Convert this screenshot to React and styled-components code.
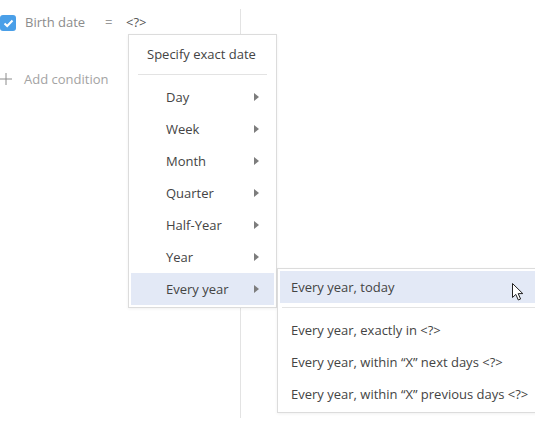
import React from "react";
import styled, { createGlobalStyle } from "styled-components";

const Global = createGlobalStyle`
  html, body { margin: 0; padding: 0; background: #fff; }
  body { font-family: "Open Sans", "Liberation Sans", sans-serif; }
  * { box-sizing: border-box; }
`;

const Page = styled.div`
  position: relative;
  width: 535px;
  height: 425px;
  overflow: hidden;
  padding-top: 9px;
`;

const LeftPanel = styled.div`
  width: 241px;
  height: 409px;
  border-right: 1px solid #e3e3e3;
  display: flex;
  flex-direction: column;
`;

const ConditionRow = styled.div`
  display: flex;
  align-items: center;
  height: 26px;
  font-size: 13px;
`;

const Checkbox = styled.span`
  width: 16px;
  height: 16px;
  border-radius: 3px;
  background: #4a9fe8;
  display: flex;
  align-items: center;
  justify-content: center;
  margin-top: 2px;
`;

const FieldName = styled.span`
  color: #8c8c8c;
  margin-left: 9px;
  width: 80px;
`;

const Op = styled.span`
  color: #9a9a9a;
  width: 21px;
`;

const Value = styled.span`
  color: #555;
`;

const AddRow = styled.div`
  display: flex;
  align-items: center;
  height: 26px;
  margin-top: 31px;
  font-size: 13px;
  color: #a3a3a3;
  gap: 12px;
`;

const Menu = styled.div`
  position: absolute;
  left: ${(p) => p.$left}px;
  top: ${(p) => p.$top}px;
  width: ${(p) => p.$width}px;
  background: #fff;
  border: 1px solid #dcdcdc;
  padding: 2px;
  box-shadow: 0 1px 3px rgba(0, 0, 0, 0.06);
  font-size: 13px;
  color: #444;
`;

const Header = styled.div`
  height: 33px;
  display: flex;
  align-items: center;
  padding-left: 16px;
`;

const Separator = styled.div`
  height: 1px;
  background: #e3e3e3;
  margin: 4px ${(p) => p.$inset}px 6px;
`;

const Item = styled.div`
  height: 32px;
  display: flex;
  align-items: center;
  justify-content: space-between;
  padding-left: ${(p) => p.$indent}px;
  padding-right: 15px;
  background: ${(p) => (p.$active ? "#e3e9f6" : "transparent")};
  white-space: nowrap;
`;

const Arrow = styled.span`
  width: 0;
  height: 0;
  border-top: 4px solid transparent;
  border-bottom: 4px solid transparent;
  border-left: 5px solid #7d7d7d;
`;

const Cursor = styled.svg`
  position: absolute;
  left: 511px;
  top: 282px;
`;

const subItems = [
  "Every year, exactly in <?>",
  "Every year, within \u201CX\u201D next days <?>",
  "Every year, within \u201CX\u201D previous days <?>",
];

const periods = ["Day", "Week", "Month", "Quarter", "Half-Year", "Year", "Every year"];

export default function App() {
  return (
    <>
      <Global />
      <Page>
        <LeftPanel>
          <ConditionRow>
            <Checkbox>
              <svg width="11" height="9" viewBox="0 0 11 9">
                <path d="M1.5 4.5 L4.2 7 L9.5 1.5" fill="none" stroke="#fff" strokeWidth="2" />
              </svg>
            </Checkbox>
            <FieldName>Birth date</FieldName>
            <Op>=</Op>
            <Value>&lt;?&gt;</Value>
          </ConditionRow>
          <AddRow>
            <svg width="12" height="12" viewBox="0 0 12 12">
              <path d="M6 0 V12 M0 6 H12" stroke="#8c8c8c" strokeWidth="1" />
            </svg>
            Add condition
          </AddRow>
        </LeftPanel>

        <Menu $left={128} $top={34} $width={149}>
          <Header>Specify exact date</Header>
          <Separator $inset={7} />
          {periods.map((p) => (
            <Item key={p} $indent={35} $active={p === "Every year"}>
              {p}
              <Arrow />
            </Item>
          ))}
        </Menu>

        <Menu $left={277} $top={268} $width={275}>
          <Item $indent={11} $active>
            Every year, today
          </Item>
          <Separator $inset={2} />
          {subItems.map((s) => (
            <Item key={s} $indent={11}>
              {s}
            </Item>
          ))}
        </Menu>

        <Cursor width="14" height="20" viewBox="0 0 14 20">
          <path
            d="M1.5 1.5 L1.5 15.5 L4.8 12.4 L7.3 18 L9.6 17 L7.2 11.6 L11.8 11.6 Z"
            fill="#fff"
            stroke="#222"
            strokeWidth="1"
            strokeLinejoin="round"
          />
        </Cursor>
      </Page>
    </>
  );
}
